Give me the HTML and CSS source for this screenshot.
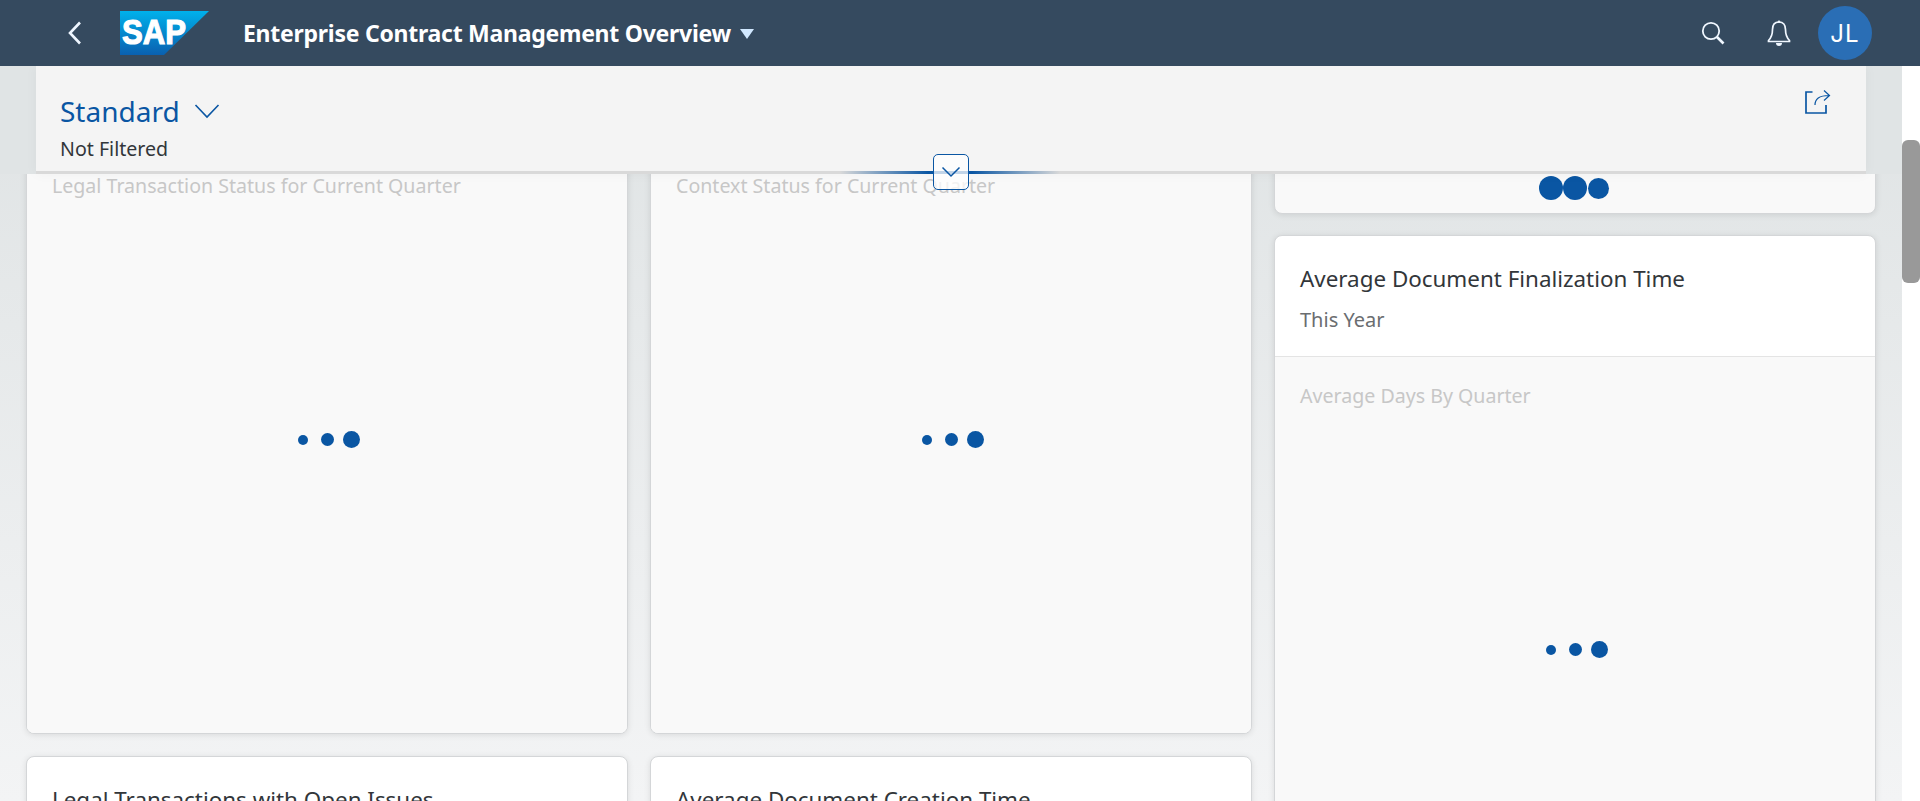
FILE: index.html
```html
<!DOCTYPE html>
<html lang="en">
<head>
<meta charset="utf-8">
<title>Enterprise Contract Management Overview</title>
<link rel="stylesheet" href="styles.css">
</head>
<body>
<div class="app">
  <header class="shell">
    <button class="back" aria-label="Back">
      <svg width="16" height="24" viewBox="0 0 16 24"><path d="M13 1.500 3 12l10 10.500" fill="none" stroke="#eef6ff" stroke-width="2.600"/></svg>
    </button>
    <svg class="logo" width="89" height="44" viewBox="0 0 89 44" aria-label="SAP">
      <defs><linearGradient id="sapg" x1="0" y1="0" x2="0" y2="1"><stop offset="0" stop-color="#00b1eb"/><stop offset="1" stop-color="#0a60b0"/></linearGradient></defs>
      <polygon points="0,0 89,0 44,44 0,44" fill="url(#sapg)"/>
      <text x="2" y="33" class="logo-text" textLength="64" lengthAdjust="spacingAndGlyphs">SAP</text>
    </svg>
    <h1 class="app-title">Enterprise Contract Management Overview</h1>
    <span class="caret"></span>
    <div class="shell-actions">
      <svg class="search" width="24" height="24" viewBox="0 0 24 24"><circle cx="10" cy="10" r="8.200" fill="none" stroke="#f0f7ff" stroke-width="1.800"/><path d="m16 16 6.500 6.500" stroke="#f0f7ff" stroke-width="2.600"/></svg>
      <svg class="bell" width="24" height="27" viewBox="0 0 24 27"><path d="M12 2c-4.200 0-6.500 3-6.500 7.500 0 5-1 8-4 11v1h21v-1c-3-3-4-6-4-11C18.500 5 16.200 2 12 2Z" fill="none" stroke="#f0f7ff" stroke-width="1.700"/><path d="M9 23h6a3 3 0 0 1-6 0Z" fill="#f0f7ff"/><circle cx="12" cy="1.800" r="1.300" fill="#f0f7ff"/></svg>
      <div class="avatar">JL</div>
    </div>
  </header>
  <div class="viewport">
    <main class="page">
      <div class="columns">
        <section class="column">
          <article class="card">
            <div class="card-head-blank"></div>
            <div class="card-body tall">
              <p class="chart-title">Legal Transaction Status for Current Quarter</p>
              <div class="loader"><i class="d1"></i><i class="d2"></i><i class="d3"></i></div>
            </div>
          </article>
          <article class="card">
            <div class="card-head"><h2 class="card-title">Legal Transactions with Open Issues</h2></div>
          </article>
        </section>
        <section class="column">
          <article class="card">
            <div class="card-head-blank"></div>
            <div class="card-body tall">
              <p class="chart-title">Context Status for Current Quarter</p>
              <div class="loader"><i class="d1"></i><i class="d2"></i><i class="d3"></i></div>
            </div>
          </article>
          <article class="card">
            <div class="card-head"><h2 class="card-title">Average Document Creation Time</h2></div>
          </article>
        </section>
        <section class="column">
          <article class="card short">
            <div class="busy"><i></i><i></i><i class="small"></i></div>
          </article>
          <article class="card">
            <div class="card-head">
              <h2 class="card-title">Average Document Finalization Time</h2>
              <p class="card-sub">This Year</p>
            </div>
            <div class="card-body tall right-body">
              <p class="chart-title">Average Days By Quarter</p>
              <div class="loader"><i class="d1"></i><i class="d2"></i><i class="d3"></i></div>
            </div>
          </article>
        </section>
      </div>
      <div class="header-band">
        <div class="filter-bar">
          <div class="variant">
            <span class="variant-name">Standard</span>
            <svg width="26" height="16" viewBox="0 0 26 16"><path d="M1.500 2 13 14 24.500 2" fill="none" stroke="#0a56a3" stroke-width="1.600"/></svg>
          </div>
          <div class="filter-state">Not Filtered</div>
          <svg class="share" width="26" height="25" viewBox="0 0 26 25"><path d="M7.500 3H1v21h20v-8" fill="none" stroke="#0a56a3" stroke-width="1.700"/><path d="M10 16c0-6 4-9.500 14-9.500M19 1.500l5.500 5-5.500 5" fill="none" stroke="#0a56a3" stroke-width="1.200"/></svg>
        </div>
      </div>
      <div class="toggle-line"></div>
      <button class="toggle" aria-label="Collapse header">
        <svg width="20" height="12" viewBox="0 0 20 12"><path d="M1.500 1.500 10 10l8.500-8.500" fill="none" stroke="#0a56a3" stroke-width="1.500"/></svg>
      </button>
    </main>
    <div class="scrollbar"><div class="thumb"></div></div>
  </div>
</div>
</body>
</html>
```
FILE: styles.css
```css
* { box-sizing: border-box; }
html, body { margin: 0; height: 100%; overflow: hidden; }
body { font-family: "Noto Sans", "Open Sans", sans-serif; color: #32363a; background: #fff; }
.app { height: 801px; display: flex; flex-direction: column; }

.shell { height: 66px; flex: none; background: #354a5f; display: flex; align-items: center; color: #fff; }
.back { width: 16px; height: 24px; margin-left: 67px; padding: 0; border: 0; background: none; display: flex; }
.logo { margin-left: 37px; flex: none; }
.logo-text { font: 700 35px "Liberation Sans", sans-serif; fill: #fff; stroke: #fff; stroke-width: 1.200px; }
.app-title { margin: 0 0 0 34px; font-size: 23px; font-weight: 700; letter-spacing: -0.26px; white-space: nowrap; }
.caret { width: 0; height: 0; margin: 1px 0 0 9px; border-left: 7px solid transparent; border-right: 7px solid transparent; border-top: 10px solid #d1e8ff; }
.shell-actions { margin-left: auto; margin-right: 48px; display: flex; align-items: center; }
.search { margin-right: 42px; }
.bell { margin-right: 27px; }
.avatar { width: 54px; height: 54px; border-radius: 50%; background: #2a6eb5; display: flex; align-items: center; justify-content: center; font-family: Inter, "Noto Sans", sans-serif; font-size: 24px; letter-spacing: 1px; }

.viewport { flex: 1; display: flex; min-height: 0; }
.page { position: relative; flex: 1; overflow: hidden; background: linear-gradient(#dfe3e4 0, #f3f4f5 100%); }
.columns { display: grid; grid-template-columns: 602px 602px 602px; column-gap: 22px; padding-left: 26px; margin-top: -41px; }
.column { display: flex; flex-direction: column; gap: 22px; }
.card { background: #fff; border: 1px solid #d4d6d8; border-radius: 8px; box-shadow: 0 1px 6px rgba(0, 0, 0, .1); overflow: hidden; }
.card.short { height: 189px; background: #f9f9f9; display: flex; align-items: flex-end; justify-content: center; padding-bottom: 13px; flex: none; margin-bottom: -1px; }
.card-head-blank { height: 121px; border-bottom: 1px solid #e4e4e4; }
.card-head { height: 121px; padding: 28px 25px 0; flex: none; border-bottom: 1px solid #e4e4e4; }
.card-title { margin: 0; font-size: 22.400px; font-weight: 400; line-height: 30px; color: #32363a; white-space: nowrap; }
.card-sub { margin: 13px 0 0; font-size: 20px; line-height: 26px; color: #6a6d70; }
.card-body { position: relative; background: #f9f9f9; padding: 26px 25px 0; }
.card-body.tall { height: 586px; display: flex; flex-direction: column; }
.card-body.right-body { height: 600px; }
.chart-title { margin: 0; font-size: 19.600px; line-height: 26px; color: #c7c7c7; }
.loader { display: flex; align-items: center; justify-content: center; margin: 232px 0 0 4px; }
.loader i { display: block; border-radius: 50%; background: #0a56a3; }
.d1 { width: 10px; height: 10px; margin-right: 13px; }
.d2 { width: 13px; height: 13px; margin-right: 9px; }
.d3 { width: 17px; height: 17px; }
.busy { display: flex; align-items: center; margin-left: -2px; }
.busy i { display: block; width: 24px; height: 24px; border-radius: 50%; background: #0a56a3; }
.busy i.small { width: 21px; height: 21px; margin-left: 1px; }

.header-band { position: absolute; top: 0; left: 0; right: 0; height: 108px; background: #e0e4e5; padding-left: 36px; }
.filter-bar { position: relative; width: 1830px; height: 108px; background: #f4f4f4; border-bottom: 3px solid #d9d9d9; padding: 27px 24px 0; box-shadow: 0 0 12px rgba(0, 0, 0, .04); }
.variant { display: flex; align-items: center; gap: 14px; }
.variant-name { font-size: 28px; line-height: 36px; color: #0a56a3; }
.filter-state { margin-top: 7px; font-size: 19.600px; line-height: 26px; color: #32363a; }
.share { position: absolute; top: 23px; right: 35px; }
.toggle-line { position: absolute; top: 105px; left: 840px; width: 220px; height: 3px; background: linear-gradient(90deg, #d9d9d9 0, #0a56a3 40%, #0a56a3 60%, #d9d9d9 100%); }
.toggle { position: absolute; top: 88px; left: 933px; width: 36px; height: 36px; padding: 0; background: rgba(255, 255, 255, .75); border: 1px solid #0a56a3; border-radius: 5px; display: flex; align-items: center; justify-content: center; }

.scrollbar { width: 18px; flex: none; background: #fff; position: relative; }
.thumb { position: absolute; top: 74px; left: 0; width: 18px; height: 143px; background: #999; border-radius: 6px; }
```
